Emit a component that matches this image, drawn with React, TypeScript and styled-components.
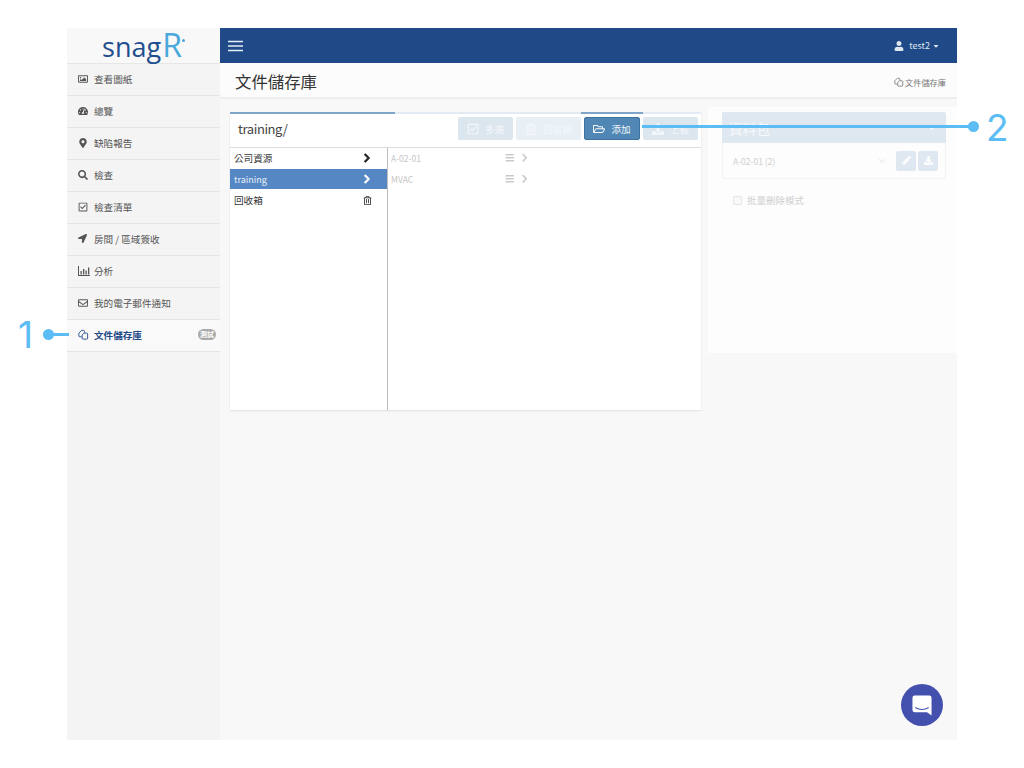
import React from 'react';
import styled, { createGlobalStyle } from 'styled-components';
import {
  FaCaretDown,
  FaChevronDown,
  FaChevronRight,
  FaDownload,
  FaLocationArrow,
  FaMapMarkerAlt,
  FaPencilAlt,
  FaRegCheckSquare,
  FaRegEnvelope,
  FaRegFolderOpen,
  FaRegImage,
  FaRegTrashAlt,
  FaSearch,
  FaTachometerAlt,
  FaUpload,
  FaUser,
  FaBars,
} from 'react-icons/fa';

const GlobalStyle = createGlobalStyle`
    html, body {
        margin: 0;
        padding: 0;
        background: #fff;
    }
    body {
        font-family: "Noto Sans CJK TC", "Noto Sans", sans-serif;
        color: #333;
    }
`;

const Page = styled.div`
    position: relative;
    width: 1024px;
    height: 768px;
    padding: 28px 0 0 67px;
    box-sizing: border-box;
    overflow: hidden;
`;

const Frame = styled.div`
    display: flex;
    width: 890px;
    height: 712px;
    background: #f8f8f8;
`;

const Sidebar = styled.aside`
    width: 153px;
    flex-shrink: 0;
    background: #f4f4f4;
`;

const LogoBox = styled.div`
    height: 35px;
    background: #f8f8f8;
    border-bottom: 1px solid #e6e6e6;
    display: flex;
    align-items: baseline;
    justify-content: center;
    font-family: "Open Sans", sans-serif;
    font-size: 27px;
    line-height: 33px;
    color: #1f4f8f;
`;

const LogoR = styled.span`
    font-size: 32px;
    margin-left: 1px;
    color: #4aa8dc;
`;

const LogoDot = styled.i`
    align-self: flex-start;
    width: 3px;
    height: 3px;
    margin: 11px 0 0 0;
    background: #4aa8dc;
    border-radius: 50%;
`;

const NavItem = styled.div<{ $active?: boolean }>`
    position: relative;
    height: 29px;
    padding: 0 0 2px 11px;
    border-bottom: 1px solid #e4e4e4;
    display: flex;
    align-items: center;
    font-size: 9.6px;
    font-weight: ${(p) => (p.$active ? 700 : 400)};
    color: ${(p) => (p.$active ? '#1f4a87' : '#555')};
    background: ${(p) => (p.$active ? '#f9f9f9' : 'transparent')};
`;

const NavIcon = styled.span`
    width: 15px;
    margin-right: 1px;
    display: flex;
    align-items: center;
    font-size: 10px;
`;

const Badge = styled.span`
    position: absolute;
    right: 4px;
    top: 9px;
    width: 18px;
    height: 11px;
    border-radius: 6px;
    background: #a9a9a9;
    color: #fff;
    font-size: 7px;
    line-height: 11px;
    text-align: center;
`;

const Main = styled.main`
    flex: 1;
    min-width: 0;
    display: flex;
    flex-direction: column;
`;

const TopBar = styled.header`
    height: 35px;
    flex-shrink: 0;
    background: #1f4a87;
    color: #dfe7f1;
    display: flex;
    align-items: center;
    justify-content: space-between;
    padding: 0 17px 0 8px;
`;

const UserMenu = styled.div`
    display: flex;
    align-items: center;
    font-size: 9px;
    gap: 5px;
`;

const TitleBar = styled.div`
    height: 34px;
    flex-shrink: 0;
    background: #fcfcfc;
    border-bottom: 2px solid #eeeeee;
    display: flex;
    align-items: center;
    justify-content: space-between;
    padding: 0 11px 0 15px;
`;

const PageTitle = styled.h1`
    margin: 2px 0 0;
    font-size: 16.4px;
    font-weight: 400;
    color: #333;
`;

const Crumb = styled.div`
    display: flex;
    align-items: center;
    gap: 1px;
    margin-top: 4px;
    font-size: 8.2px;
    color: #777;
`;

const Content = styled.div`
    display: flex;
    align-items: flex-start;
    padding: 8px 0 0 10px;
    gap: 7px;
`;

const Explorer = styled.section`
    position: relative;
    width: 471px;
    height: 298px;
    margin-top: 5px;
    background: #fff;
    box-shadow: 0 1px 2px rgba(0, 0, 0, 0.1);
    display: flex;
    flex-direction: column;
    border-top: 2px solid #e2ebf3;
    box-sizing: border-box;
`;

const ProgressTab = styled.span<{ $left: number; $width: number }>`
    position: absolute;
    top: -2px;
    left: ${(p) => p.$left}px;
    width: ${(p) => p.$width}px;
    height: 2px;
    background: #7fa5c8;
`;

const ExplorerHead = styled.div`
    height: 29px;
    flex-shrink: 0;
    display: flex;
    align-items: center;
    justify-content: space-between;
    padding: 0 3px 4px 8px;
    border-bottom: 1px solid #dddddd;
`;

const PathLabel = styled.div`
    margin-top: -1px;
    font-size: 13px;
    letter-spacing: -0.4px;
    color: #444;
`;

const Toolbar = styled.div`
    display: flex;
    gap: 3px;
`;

const ToolButton = styled.div<{ $tone: 'blue' | 'pale' | 'active'; $width: number }>`
    width: ${(p) => p.$width}px;
    height: 23px;
    box-sizing: border-box;
    border-radius: 2px;
    display: flex;
    align-items: center;
    justify-content: center;
    gap: 6px;
    font-size: 9.5px;
    color: ${(p) => (p.$tone === 'active' ? '#f2f6fa' : '#f4f7fa')};
    background: ${(p) =>
      p.$tone === 'active' ? '#5087b5' : p.$tone === 'pale' ? '#e8eff5' : '#dce6ef'};
    border: 1px solid ${(p) => (p.$tone === 'active' ? '#3f739f' : 'transparent')};
    svg {
        font-size: 12px;
    }
`;

const Panes = styled.div`
    flex: 1;
    display: flex;
    min-height: 0;
`;

const Tree = styled.div`
    width: 157px;
    flex-shrink: 0;
    border-right: 1px solid #bdbdbd;
`;

const TreeRow = styled.div<{ $selected?: boolean }>`
    height: 20px;
    margin-bottom: 1px;
    display: flex;
    align-items: center;
    justify-content: space-between;
    padding: 0 15px 0 4px;
    font-size: ${(p) => (p.$selected ? '9px' : '9.6px')};
    color: ${(p) => (p.$selected ? '#e8eff8' : '#333')};
    background: ${(p) => (p.$selected ? '#5587c4' : 'transparent')};
`;

const Chevron = styled(FaChevronRight)<{ $light?: boolean }>`
    font-size: 10px;
    stroke: currentColor;
    stroke-width: 40;
    color: ${(p) => (p.$light ? '#fff' : '#222')};
`;

const Files = styled.div`
    flex: 1;
`;

const FileRow = styled.div`
    width: 138px;
    height: 20px;
    margin-bottom: 1px;
    display: flex;
    align-items: center;
    padding-left: 3px;
    font-size: 8.5px;
    color: #c6c6c6;
`;

const FileName = styled.span`
    flex: 1;
`;

const FileIcons = styled.span`
    display: flex;
    align-items: center;
    gap: 5px;
    font-size: 9.5px;
    color: #c9c9c9;
`;

const SidePanel = styled.section`
    width: 249px;
    height: 246px;
    box-sizing: border-box;
    background: #fdfdfd;
    padding: 5px 11px 0 14px;
`;

const PackHead = styled.div`
    height: 31px;
    display: flex;
    align-items: center;
    justify-content: space-between;
    padding: 0 10px 0 7px;
    background: #dfe8f0;
    border-radius: 2px 2px 0 0;
    color: #f7f9fb;
    font-size: 13.6px;
`;

const PackBody = styled.div`
    height: 36px;
    box-sizing: border-box;
    display: flex;
    align-items: center;
    padding: 0 7px 0 10px;
    border: 1px solid #f3f3f3;
    border-top: 0;
    border-radius: 0 0 3px 3px;
    font-size: 8.5px;
    color: #cfcfcf;
`;

const PackName = styled.span`
    flex: 1;
`;

const PackChevron = styled(FaChevronDown)`
    margin-right: 8px;
    font-size: 8px;
    color: #ececec;
`;

const SquareButton = styled.div`
    width: 20px;
    height: 20px;
    margin-left: 2px;
    border-radius: 2px;
    background: #dfe8f0;
    color: #fff;
    display: flex;
    align-items: center;
    justify-content: center;
    font-size: 9px;
`;

const BulkRow = styled.div`
    display: flex;
    align-items: center;
    gap: 5px;
    margin: 14px 0 0 11px;
    font-size: 9.5px;
    color: #cfcfcf;
`;

const FakeCheck = styled.span`
    width: 7px;
    height: 7px;
    border: 1px solid #e6e6e6;
    border-radius: 1px;
    background: #f8f8f8;
`;

const ChatButton = styled.div`
    position: absolute;
    left: 901px;
    top: 684px;
    width: 42px;
    height: 42px;
    border-radius: 50%;
    background: #4450ae;
    display: flex;
    align-items: center;
    justify-content: center;
`;

const CalloutLine = styled.div<{ $left: number; $top: number; $width: number }>`
    position: absolute;
    left: ${(p) => p.$left}px;
    top: ${(p) => p.$top}px;
    width: ${(p) => p.$width}px;
    height: 3px;
    background: #5bbdf4;
`;

const CalloutDot = styled.div<{ $left: number; $top: number }>`
    position: absolute;
    left: ${(p) => p.$left}px;
    top: ${(p) => p.$top}px;
    width: 11px;
    height: 11px;
    border-radius: 50%;
    background: #5bbdf4;
`;

const CalloutNumber = styled.div<{ $left: number; $top: number }>`
    position: absolute;
    left: ${(p) => p.$left}px;
    top: ${(p) => p.$top}px;
    font-family: "Inter", "Liberation Sans", sans-serif;
    font-weight: 400;
    font-size: 37px;
    line-height: 40px;
    color: #5bbdf4;
`;

const DocsIcon: React.FC<{ size?: number }> = ({ size = 11 }) => (
  <svg width={size} height={size} viewBox="0 0 12 12" fill="none" stroke="currentColor" strokeWidth="1">
    <path d="M4 8.5H2a1 1 0 0 1-1-1V4.5L4 1.5h2a1 1 0 0 1 1 1V4" />
    <path d="M6.5 4.5h3a1 1 0 0 1 1 1v4.5a1 1 0 0 1-1 1H5.5a1 1 0 0 1-1-1V6.5z" />
  </svg>
);

const BurgerIcon: React.FC = () => (
  <svg width="15" height="12" viewBox="0 0 15 12" stroke="#e6edf5" strokeWidth="1.3">
    <path d="M0 1.500h15M0 6h15M0 10.500h15" />
  </svg>
);

const BarsIcon: React.FC = () => (
  <svg width="12" height="10" viewBox="0 0 12 10" fill="currentColor">
    <path d="M0 0h1v9h11v1H0z" />
    <path d="M2.500 5h1.300v3.500H2.500zM5 3h1.300v5.500H5zM7.500 4.500h1.300v4H7.500zM10 1.500h1.300v7H10z" />
  </svg>
);

const navItems = [
  { icon: <FaRegImage />, label: '查看圖紙' },
  { icon: <FaTachometerAlt />, label: '總覽' },
  { icon: <FaMapMarkerAlt />, label: '缺陷報告' },
  { icon: <FaSearch />, label: '檢查' },
  { icon: <FaRegCheckSquare />, label: '檢查清單' },
  { icon: <FaLocationArrow size={9} />, label: '房間 / 區域簽收' },
  { icon: <BarsIcon />, label: '分析' },
  { icon: <FaRegEnvelope />, label: '我的電子郵件通知' },
];

const App: React.FC = () => (
  <Page>
    <GlobalStyle />
    <Frame>
      <Sidebar>
        <LogoBox>
          snag<LogoR>R</LogoR>
          <LogoDot />
        </LogoBox>
        {navItems.map((item) => (
          <NavItem key={item.label}>
            <NavIcon>{item.icon}</NavIcon>
            {item.label}
          </NavItem>
        ))}
        <NavItem $active>
          <NavIcon><DocsIcon /></NavIcon>
          文件儲存庫
          <Badge>測試</Badge>
        </NavItem>
      </Sidebar>
      <Main>
        <TopBar>
          <BurgerIcon />
          <UserMenu>
            <FaUser size={10} />
            <span>test2</span>
            <FaCaretDown size={8} style={{ marginLeft: -3 }} />
          </UserMenu>
        </TopBar>
        <TitleBar>
          <PageTitle>文件儲存庫</PageTitle>
          <Crumb><DocsIcon size={10} />文件儲存庫</Crumb>
        </TitleBar>
        <Content>
          <Explorer>
            <ProgressTab $left={0} $width={165} />
            <ProgressTab $left={351} $width={62} />
            <ExplorerHead>
              <PathLabel>training/</PathLabel>
              <Toolbar>
                <ToolButton $tone="blue" $width={55}><FaRegCheckSquare />多選</ToolButton>
                <ToolButton $tone="pale" $width={65}><FaRegTrashAlt />回收箱</ToolButton>
                <ToolButton $tone="active" $width={56}><FaRegFolderOpen />添加</ToolButton>
                <ToolButton $tone="blue" $width={55}><FaUpload />上載</ToolButton>
              </Toolbar>
            </ExplorerHead>
            <Panes>
              <Tree>
                <TreeRow>公司資源<Chevron /></TreeRow>
                <TreeRow $selected>training<Chevron $light /></TreeRow>
                <TreeRow>回收箱<FaRegTrashAlt size={9} /></TreeRow>
              </Tree>
              <Files>
                <FileRow>
                  <FileName>A-02-01</FileName>
                  <FileIcons><FaBars /><FaChevronRight /></FileIcons>
                </FileRow>
                <FileRow>
                  <FileName>MVAC</FileName>
                  <FileIcons><FaBars /><FaChevronRight /></FileIcons>
                </FileRow>
              </Files>
            </Panes>
          </Explorer>
          <SidePanel>
            <PackHead>資料包<FaChevronDown size={9} /></PackHead>
            <PackBody>
              <PackName>A-02-01 (2)</PackName>
              <PackChevron />
              <SquareButton><FaPencilAlt /></SquareButton>
              <SquareButton><FaDownload /></SquareButton>
            </PackBody>
            <BulkRow><FakeCheck />批量刪除模式</BulkRow>
          </SidePanel>
        </Content>
      </Main>
    </Frame>
    <ChatButton>
      <svg width="20" height="23" viewBox="0 0 22 24">
        <path d="M3 1h16a2.500 2.500 0 0 1 2.500 2.500V23l-5-3.500H3A2.500 2.500 0 0 1 .5 17V3.500A2.500 2.500 0 0 1 3 1z" fill="#fff" />
        <path d="M4 14.500c4 2.500 10 2.500 14 0" fill="none" stroke="#4450ae" strokeWidth="1.2" strokeLinecap="round" />
      </svg>
    </ChatButton>
    <CalloutNumber $left={18} $top={315}>1</CalloutNumber>
    <CalloutDot $left={43} $top={329} />
    <CalloutLine $left={50} $top={333} $width={19} />
    <CalloutLine $left={642} $top={125} $width={330} />
    <CalloutDot $left={968} $top={121} />
    <CalloutNumber $left={986} $top={108}>2</CalloutNumber>
  </Page>
);

export default App;
